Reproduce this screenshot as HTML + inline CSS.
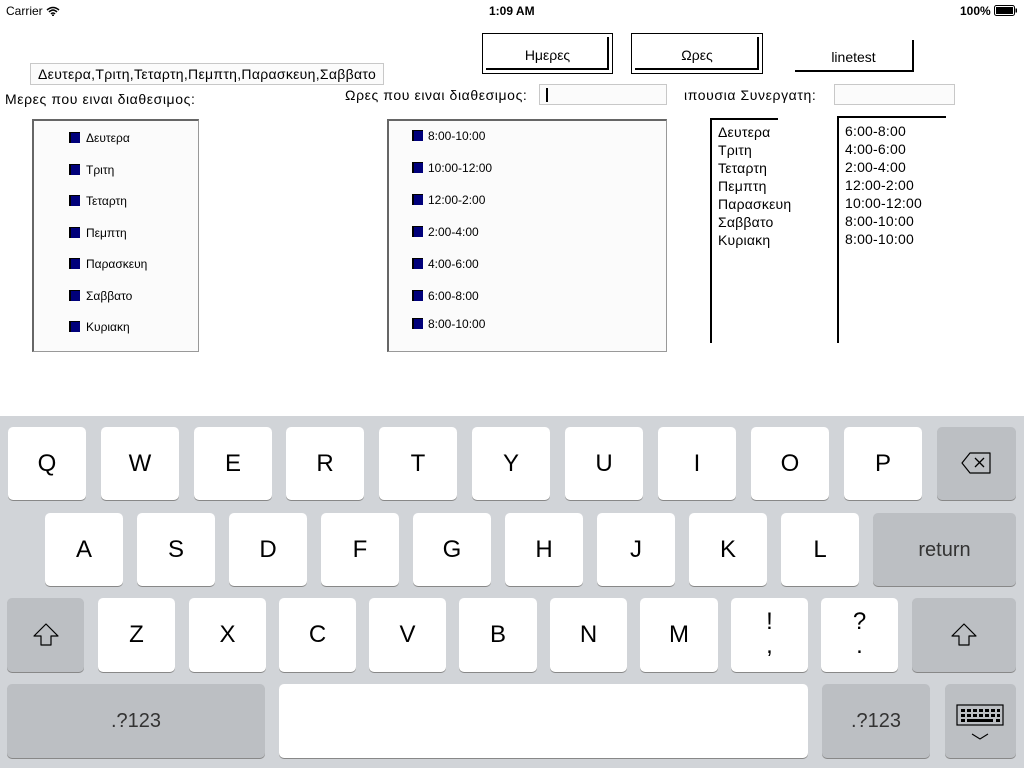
<!DOCTYPE html>
<html><head><meta charset="utf-8"><style>
*{margin:0;padding:0;box-sizing:border-box}
body{width:1024px;height:768px;position:relative;background:#fff;font-family:"Liberation Sans",sans-serif;overflow:hidden;color:#000}
.a{position:absolute}
.sb{font-size:12px;font-weight:bold;top:4px}
.btn{position:absolute;border:1px solid #000;font-size:14px;text-align:center}
.btn i{position:absolute;right:3px;bottom:3px;left:3px;top:3px;border-right:2px solid #000;border-bottom:2px solid #000}
.lbl{position:absolute;font-size:14px;letter-spacing:.6px}
.fld{position:absolute;border:1px solid #c8c8c8;background:#fbfbfb}
.box{position:absolute;border:1px solid #999;border-top:2px solid #666;border-left:2px solid #666;background:#fbfbfb}
.it{position:absolute;font-size:12px}
.cb{position:absolute;width:11px;height:11px;background:#00007a;border-left:2px solid #000;border-top:1px solid #000}
.lst{position:absolute;border-left:2px solid #000;border-top:2px solid #000;font-size:14px;line-height:18px;padding:3px 0 0 6px;letter-spacing:.2px}
.kb{position:absolute;left:0;top:416px;width:1024px;height:352px;background:#d1d4d8}
.k{position:absolute;background:#fff;border-radius:5px;box-shadow:0 1px 0 #888;font-size:24px;text-align:center;line-height:74px;width:78px;height:73px}
.s{background:#bcbfc3}
</style></head><body>
<div class="a sb" style="left:6px;font-weight:normal;font-size:12px">Carrier <svg width="14" height="10" viewBox="0 0 14 10" style="vertical-align:-1px"><path d="M1 4Q7-1 13 4M3 6Q7 2 11 6M5 8Q7 6 9 8" stroke="#000" stroke-width="1.5" fill="none"/><circle cx="7" cy="9.3" r="1" fill="#000"/></svg></div>
<div class="a sb" style="left:489px">1:09 AM</div>
<div class="a sb" style="left:960px">100% <svg width="24" height="11" viewBox="0 0 24 11" style="vertical-align:-1px"><rect x=".5" y=".5" width="20" height="10" rx="2" fill="none" stroke="#000"/><rect x="2" y="2" width="17" height="7" fill="#000"/><rect x="21.5" y="3.5" width="1.5" height="4" fill="#000"/></svg></div>

<div class="btn" style="left:482px;top:33px;width:131px;height:41px;line-height:42px">Ημερες<i></i></div>
<div class="btn" style="left:631px;top:33px;width:132px;height:41px;line-height:42px">Ωρες<i></i></div>
<div class="a" style="left:795px;top:40px;width:119px;height:32px;border-right:2px solid #000;border-bottom:2px solid #000;font-size:14px;text-align:center;line-height:34px">linetest</div>

<div class="fld" style="left:30px;top:63px;width:354px;height:22px;overflow:hidden;white-space:nowrap;font-size:14px;line-height:21px;padding-left:7px;letter-spacing:.3px">Δευτερα,Τριτη,Τεταρτη,Πεμπτη,Παρασκευη,Σαββατο</div>
<div class="lbl" style="left:5px;top:91px">Μερες που ειναι διαθεσιμος:</div>
<div class="lbl" style="left:345px;top:87px">Ωρες που ειναι διαθεσιμος:</div>
<div class="fld" style="left:539px;top:84px;width:128px;height:21px"><div class="a" style="left:6px;top:3px;width:2px;height:14px;background:#000"></div></div>
<div class="lbl" style="left:684px;top:87px;width:140px;overflow:hidden;white-space:nowrap">ιπουσια Συνεργατη:</div>
<div class="fld" style="left:834px;top:84px;width:121px;height:21px"></div>

<div class="box" style="left:32px;top:119px;width:167px;height:233px"></div>
<div class="cb" style="left:69px;top:132px"></div><div class="it" style="left:86px;top:131px">Δευτερα</div>
<div class="cb" style="left:69px;top:164px"></div><div class="it" style="left:86px;top:163px">Τριτη</div>
<div class="cb" style="left:69px;top:195px"></div><div class="it" style="left:86px;top:194px">Τεταρτη</div>
<div class="cb" style="left:69px;top:227px"></div><div class="it" style="left:86px;top:226px">Πεμπτη</div>
<div class="cb" style="left:69px;top:258px"></div><div class="it" style="left:86px;top:257px">Παρασκευη</div>
<div class="cb" style="left:69px;top:290px"></div><div class="it" style="left:86px;top:289px">Σαββατο</div>
<div class="cb" style="left:69px;top:321px"></div><div class="it" style="left:86px;top:320px">Κυριακη</div>

<div class="box" style="left:387px;top:119px;width:280px;height:233px"></div>
<div class="cb" style="left:412px;top:130px"></div><div class="it" style="left:428px;top:129px">8:00-10:00</div>
<div class="cb" style="left:412px;top:162px"></div><div class="it" style="left:428px;top:161px">10:00-12:00</div>
<div class="cb" style="left:412px;top:194px"></div><div class="it" style="left:428px;top:193px">12:00-2:00</div>
<div class="cb" style="left:412px;top:226px"></div><div class="it" style="left:428px;top:225px">2:00-4:00</div>
<div class="cb" style="left:412px;top:258px"></div><div class="it" style="left:428px;top:257px">4:00-6:00</div>
<div class="cb" style="left:412px;top:290px"></div><div class="it" style="left:428px;top:289px">6:00-8:00</div>
<div class="cb" style="left:412px;top:318px"></div><div class="it" style="left:428px;top:317px">8:00-10:00</div>

<div class="lst" style="left:710px;top:118px;width:68px;height:225px">Δευτερα<br>Τριτη<br>Τεταρτη<br>Πεμπτη<br>Παρασκευη<br>Σαββατο<br>Κυριακη</div>
<div class="lst" style="left:837px;top:116px;width:109px;height:227px;padding-top:4px">6:00-8:00<br>4:00-6:00<br>2:00-4:00<br>12:00-2:00<br>10:00-12:00<br>8:00-10:00<br>8:00-10:00</div>

<div class="kb"></div>
<div class="k" style="left:8px;top:427px">Q</div>
<div class="k" style="left:101px;top:427px">W</div>
<div class="k" style="left:194px;top:427px">E</div>
<div class="k" style="left:286px;top:427px">R</div>
<div class="k" style="left:379px;top:427px">T</div>
<div class="k" style="left:472px;top:427px">Y</div>
<div class="k" style="left:565px;top:427px">U</div>
<div class="k" style="left:658px;top:427px">I</div>
<div class="k" style="left:751px;top:427px">O</div>
<div class="k" style="left:844px;top:427px">P</div>
<div class="k s" style="left:937px;top:427px;width:79px"><svg width="32" height="24" viewBox="0 0 32 24" style="margin-top:24px"><path d="M9 2H29V22H9L1 12Z" fill="none" stroke="#000" stroke-width="1.2" stroke-linejoin="round"/><path d="M14 7L23 16M23 7L14 16" stroke="#000" stroke-width="1.3"/></svg></div>

<div class="k" style="left:45px;top:513px">A</div>
<div class="k" style="left:137px;top:513px">S</div>
<div class="k" style="left:229px;top:513px">D</div>
<div class="k" style="left:321px;top:513px">F</div>
<div class="k" style="left:413px;top:513px">G</div>
<div class="k" style="left:505px;top:513px">H</div>
<div class="k" style="left:597px;top:513px">J</div>
<div class="k" style="left:689px;top:513px">K</div>
<div class="k" style="left:781px;top:513px">L</div>
<div class="k s" style="left:873px;top:513px;width:143px;font-size:20px;color:#333">return</div>

<div class="k s" style="left:7px;top:598px;width:77px;height:74px"><svg width="26" height="24" viewBox="0 0 26 24" style="margin-top:25px"><path d="M13 1L25 13H18V22H8V13H1Z" fill="none" stroke="#000" stroke-width="1.2" stroke-linejoin="round"/></svg></div>
<div class="k" style="left:98px;top:598px;width:77px;height:74px">Z</div>
<div class="k" style="left:189px;top:598px;width:77px;height:74px">X</div>
<div class="k" style="left:279px;top:598px;width:77px;height:74px">C</div>
<div class="k" style="left:369px;top:598px;width:77px;height:74px">V</div>
<div class="k" style="left:459px;top:598px;width:78px;height:74px">B</div>
<div class="k" style="left:550px;top:598px;width:77px;height:74px">N</div>
<div class="k" style="left:640px;top:598px;width:78px;height:74px">M</div>
<div class="k" style="left:731px;top:598px;width:77px;height:74px;line-height:24px;padding-top:12px">!<br>,</div>
<div class="k" style="left:821px;top:598px;width:77px;height:74px;line-height:24px;padding-top:12px">?<br>.</div>
<div class="k s" style="left:912px;top:598px;width:104px;height:74px"><svg width="26" height="24" viewBox="0 0 26 24" style="margin-top:25px"><path d="M13 1L25 13H18V22H8V13H1Z" fill="none" stroke="#000" stroke-width="1.2" stroke-linejoin="round"/></svg></div>

<div class="k s" style="left:7px;top:684px;width:258px;height:74px;font-size:20px;color:#333">.?123</div>
<div class="k" style="left:279px;top:684px;width:529px;height:74px"></div>
<div class="k s" style="left:822px;top:684px;width:108px;height:74px;font-size:20px;color:#333">.?123</div>
<div class="k s" style="left:945px;top:684px;width:71px;height:74px"><svg width="48" height="40" viewBox="0 0 48 40" style="margin-top:20px;display:block;margin-left:11px"><rect x="1" y="1" width="46" height="20" fill="none" stroke="#000" stroke-width="1.2"/><g fill="#000"><rect x="5" y="5" width="4" height="3"/><rect x="11" y="5" width="4" height="3"/><rect x="17" y="5" width="4" height="3"/><rect x="23" y="5" width="4" height="3"/><rect x="29" y="5" width="4" height="3"/><rect x="35" y="5" width="4" height="3"/><rect x="41" y="5" width="3" height="3"/><rect x="5" y="10" width="4" height="3"/><rect x="11" y="10" width="4" height="3"/><rect x="17" y="10" width="4" height="3"/><rect x="23" y="10" width="4" height="3"/><rect x="29" y="10" width="4" height="3"/><rect x="35" y="10" width="4" height="3"/><rect x="41" y="10" width="3" height="3"/><rect x="5" y="15" width="4" height="3"/><rect x="11" y="15" width="26" height="3"/><rect x="40" y="15" width="4" height="3"/></g><path d="M16 30L24 35L32 30" fill="none" stroke="#000" stroke-width="1.1"/></svg></div>
</body></html>
